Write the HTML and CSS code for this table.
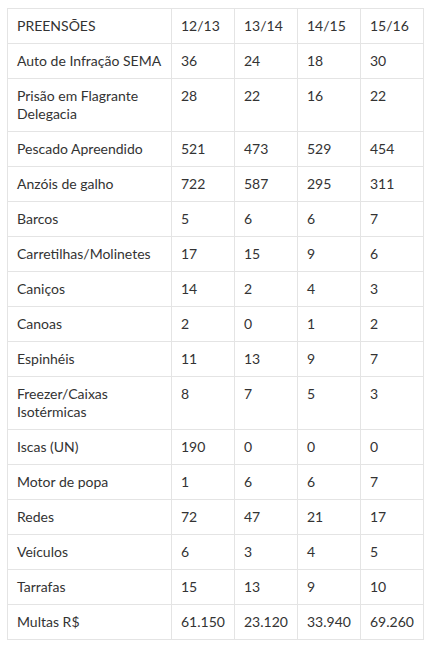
FILE: index.html
```html
<!DOCTYPE html>
<html lang="pt">
<head>
<meta charset="utf-8">
<link rel="stylesheet" href="styles.css">
</head>
<body>
<table class="data">
  <colgroup>
    <col class="c-label">
    <col class="c-num">
    <col class="c-num">
    <col class="c-num">
    <col class="c-num">
  </colgroup>
  <tbody>
    <tr><td>PREENSÕES</td><td>12/13</td><td>13/14</td><td>14/15</td><td>15/16</td></tr>
    <tr><td>Auto de Infração SEMA</td><td>36</td><td>24</td><td>18</td><td>30</td></tr>
    <tr><td>Prisão em Flagrante Delegacia</td><td>28</td><td>22</td><td>16</td><td>22</td></tr>
    <tr><td>Pescado Apreendido</td><td>521</td><td>473</td><td>529</td><td>454</td></tr>
    <tr><td>Anzóis de galho</td><td>722</td><td>587</td><td>295</td><td>311</td></tr>
    <tr><td>Barcos</td><td>5</td><td>6</td><td>6</td><td>7</td></tr>
    <tr><td>Carretilhas/Molinetes</td><td>17</td><td>15</td><td>9</td><td>6</td></tr>
    <tr><td>Caniços</td><td>14</td><td>2</td><td>4</td><td>3</td></tr>
    <tr><td>Canoas</td><td>2</td><td>0</td><td>1</td><td>2</td></tr>
    <tr><td>Espinhéis</td><td>11</td><td>13</td><td>9</td><td>7</td></tr>
    <tr><td>Freezer/Caixas Isotérmicas</td><td>8</td><td>7</td><td>5</td><td>3</td></tr>
    <tr><td>Iscas (UN)</td><td>190</td><td>0</td><td>0</td><td>0</td></tr>
    <tr><td>Motor de popa</td><td>1</td><td>6</td><td>6</td><td>7</td></tr>
    <tr><td>Redes</td><td>72</td><td>47</td><td>21</td><td>17</td></tr>
    <tr><td>Veículos</td><td>6</td><td>3</td><td>4</td><td>5</td></tr>
    <tr><td>Tarrafas</td><td>15</td><td>13</td><td>9</td><td>10</td></tr>
    <tr><td>Multas R$</td><td>61.150</td><td>23.120</td><td>33.940</td><td>69.260</td></tr>
  </tbody>
</table>
</body>
</html>
```
FILE: styles.css
```css
html, body {
  margin: 0;
  padding: 0;
  background: #ffffff;
}
body {
  padding: 8px 0 0 7px;
  font-family: Lato, "Open Sans", sans-serif;
  font-size: 14px;
  color: #333333;
}
.data {
  border-collapse: collapse;
  table-layout: fixed;
  width: 416px;
}
.c-label { width: 164px; }
.c-num { width: 63px; }
.data td {
  border: 1px solid #e4e4e4;
  padding: 8px 9px 8px 9px;
  line-height: 18px;
  vertical-align: top;
  text-align: left;
}
```
